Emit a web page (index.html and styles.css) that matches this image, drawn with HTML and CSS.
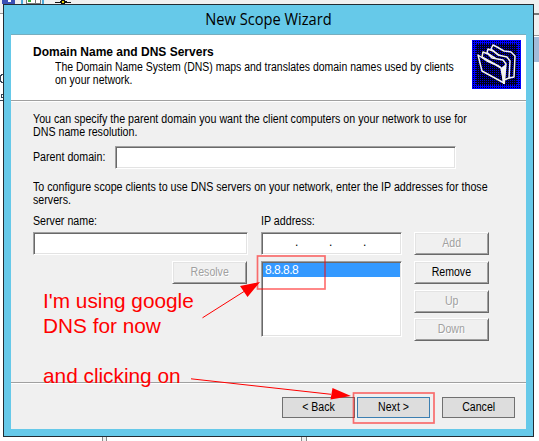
FILE: index.html
```
<!DOCTYPE html>
<html lang="en">
<head>
<meta charset="utf-8">
<title>New Scope Wizard</title>
<link rel="stylesheet" href="styles.css">
</head>
<body>
<svg class="desktop" width="539" height="441" viewBox="0 0 539 441" shape-rendering="crispEdges">
  <rect width="539" height="441" fill="#fff"/>
  <rect width="539" height="13" fill="#f0f0f0"/>
  <rect x="533" y="13" width="6" height="22" fill="#f0f0f0"/>
  <rect x="533" y="13" width="6" height="2" fill="#777"/>
  <rect x="533" y="35" width="6" height="1" fill="#999"/>
  <rect x="533" y="37" width="6" height="25" fill="#a2bbd9"/>
  <rect y="13" width="4" height="1" fill="#999"/>
  <rect x="2" width="13" height="4" fill="#3c50b5"/>
  <rect x="8" width="3" height="2" fill="#fff"/>
  <rect x="21" width="2" height="4" fill="#4aa8d8"/>
  <rect x="26" width="15" height="4" fill="#777"/>
  <rect x="27" width="13" height="3" fill="#fff"/>
  <path d="M28 0h3v2h-3z" fill="#35ad35"/>
  <rect x="35" width="1" height="3" fill="#777"/>
  <rect x="42" width="2" height="4" fill="#4aa8d8"/>
  <path d="M55 2h16v1h-16zM60 1h7v1h-7zM61 0h4v4h-4z" fill="#111"/>
  <rect x="62" y="1" width="2" height="2" fill="#e8d000"/>
  <path d="M102 437h1v4h-1zM106 437h1v4h-1zM301 437h1v4h-1zM306 437h1v4h-1z" fill="#888"/>
  <path d="M103 437h3v4h-3zM302 437h4v4h-4z" fill="#f0f0f0"/>
  <path d="M3 74H1v1H0v6h1v1h2M3 94H1v3h2v3H0" fill="none" stroke="#345"/>
</svg>

<main class="window">
  <h1 class="titlebar">New Scope Wizard</h1>
  <section class="client">
    <header class="banner">
      <div class="heading">
        <h2>Domain Name and DNS Servers</h2>
        <p class="narrow">The Domain Name System (DNS) maps and translates domain names used by clients<br>on your network.</p>
      </div>
      <svg class="folders" width="49" height="49" viewBox="0 0 49 49">
        <defs>
          <pattern id="dots" width="2" height="2" patternUnits="userSpaceOnUse"><rect width="2" height="2" fill="#0000ff"/><rect x="1" y="1" width="1" height="1" fill="#000010"/></pattern>
          <pattern id="shade" width="2" height="2" patternUnits="userSpaceOnUse"><rect width="2" height="2" fill="#000018"/><rect width="1" height="1" fill="#0000e0"/></pattern>
        </defs>
        <rect width="49" height="49" fill="url(#dots)"/>
        <rect x="4" y="4" width="41" height="41" fill="url(#shade)"/>
        <g fill="url(#shade)" stroke="#f2f2f2" stroke-width="1.5" stroke-linejoin="round">
          <path d="M19 9l2-4 4 2 7 4 7 1 4 4-1 21-5 1-5-19z"/>
          <path d="M15 13l1-4 5 2 5 4 9 2 3 4-1 17-5 2-3-18z"/>
          <path d="M10 17l1-5 5 2 4 4 11 2 3 4-2 19-4-16z"/>
          <path d="M6 15l4 16 22 12-3-15-5-3-9-4z"/>
        </g>
        <path d="M29 28l5-4-1 20h-2z" fill="#f2f2f2"/>
      </svg>
    </header>

    <div class="page">
      <p class="narrow">You can specify the parent domain you want the client computers on your network to use for<br>DNS name resolution.</p>
      <div class="parent"><label class="narrow">Parent domain:</label><div class="field"></div></div>
      <p class="narrow hint">To configure scope clients to use DNS servers on your network, enter the IP addresses for those<br>servers.</p>
      <div class="servers">
        <div class="name-col">
          <label class="narrow">Server name:</label>
          <div class="field"></div>
          <button class="raised off resolve"><span>Resolve</span></button>
        </div>
        <div class="ip-col">
          <label class="narrow">IP address:</label>
          <div class="field ip"><i>.</i><i>.</i><i>.</i></div>
          <div class="list"><div class="selected">8.8.8.8</div></div>
        </div>
        <div class="actions">
          <button class="raised off"><span>Add</span></button>
          <button class="raised"><span>Remove</span></button>
          <button class="raised off"><span>Up</span></button>
          <button class="raised off"><span>Down</span></button>
        </div>
      </div>
    </div>

    <footer class="footer">
      <button class="flat"><span>&lt; Back</span></button>
      <button class="flat default"><span>Next &gt;</span></button>
      <button class="flat cancel"><span>Cancel</span></button>
    </footer>
  </section>
</main>

<p class="note google">I'm using google<br>DNS for now</p>
<p class="note clicking">and clicking on</p>
<svg class="marks" width="539" height="441" viewBox="0 0 539 441">
  <g fill="none" stroke="#ff0000" stroke-opacity=".55" stroke-width="1.7">
    <rect x="257.500" y="256" width="67.500" height="33"/>
    <rect x="353.500" y="393" width="80.500" height="30"/>
  </g>
  <g fill="#f00" stroke="#f00">
    <path d="M202.500 317.800L244 291.500M191 378.800L331 394.300"/>
    <path stroke="none" d="M260 282l-20 4 7.500 11zM351 396l-18.500-8-2 11.500z"/>
  </g>
</svg>
</body>
</html>
```
FILE: styles.css
```
* { box-sizing: border-box; }
body {
  margin: 0;
  width: 539px;
  height: 441px;
  position: relative;
  overflow: hidden;
  font: 12px/13px "Liberation Sans", Arial, sans-serif;
  color: #000;
}
h1, h2, p { margin: 0; font-weight: normal; }
.desktop, .marks { position: absolute; left: 0; top: 0; }
.window {
  position: absolute;
  left: 3px;
  top: 4px;
  width: 531px;
  height: 433px;
  padding: 0 7px 7px;
  border: 1px solid #222c33;
  background: #66c9e9;
}
.titlebar {
  height: 29px;
  font: 15.5px/29px "Open Sans", sans-serif;
  text-align: center;
  transform: scaleX(.945);
}
.client {
  height: 395px;
  display: flex;
  flex-direction: column;
  background: #f0f0f0;
  border-top: 1px solid #77aebf;
  width: 515px;
}
.narrow { transform: scaleX(.889); transform-origin: 0 0; }
.banner {
  height: 66px;
  display: flex;
  justify-content: space-between;
  padding: 5px 5px 0 22px;
  background: #fff;
  border-bottom: 1px solid #a0a0a0;
  box-shadow: 0 1px #fff;
  white-space: nowrap;
}
.heading { width: 430px; }
.folders { flex: none; }
.banner h2 {
  font-weight: bold;
  font-size: 12px;
  margin-top: 6px;
}
.banner p { margin: 2px 0 0 22px; transform: scaleX(.873); }
.page { padding: 12px 0 0 22px; flex: 1; white-space: nowrap; }
.parent { display: flex; align-items: center; margin-top: 7px; height: 23px; }
.parent label { width: 82px; }
.parent .field { width: 341px; }
.hint { margin-top: 12px; }
.field, .list {
  height: 23px;
  background: #fff;
  border: 1px solid;
  border-color: #a0a0a0 #fff #fff #a0a0a0;
  box-shadow: inset 1px 1px #696969, inset -1px -1px #e3e3e3;
}
.servers {
  display: grid;
  grid-template-columns: 215px 141px 75px;
  column-gap: 13px;
  margin-top: 7px;
}
.servers label { display: block; height: 18px; line-height: 14px; }
.name-col { display: flex; flex-direction: column; }
.resolve { margin: 6px 1px 0 auto; }
.ip { display: flex; padding: 3px 0 0 33px; gap: 31px; }
.ip i { font-style: normal; width: 3px; }
.list { height: 76px; margin-top: 6px; padding: 1px; }
.selected { background: #3399ff; color: #fff; height: 14px; padding-left: 2px; line-height: 15px; letter-spacing: -.5px; }
.actions { padding-top: 18px; display: flex; flex-direction: column; gap: 6px; margin-left: -1px; }
button { font: inherit; color: inherit; padding: 0; margin: 0; }
button span { display: inline-block; transform: scaleX(.88); }
.raised {
  width: 75px;
  height: 23px;
  background: #f0f0f0;
  border: 1px solid;
  border-color: #fff #696969 #696969 #fff;
  box-shadow: inset 1px 1px #e3e3e3, inset -1px -1px #a0a0a0;
}
.raised:last-child { margin-top: -1px; }
.resolve:last-child { margin-top: 6px; }
.off { color: #a0a0a0; text-shadow: 1px 1px #fff; }
.footer {
  height: 47px;
  display: flex;
  align-items: flex-start;
  gap: 2px;
  padding: 14px 0 0 271px;
  border-top: 1px solid #a0a0a0;
  box-shadow: inset 0 1px #fff;
}
.flat { width: 73px; height: 21px; border: 1px solid #707070; background: #ddd; }
.default { border-color: #3c7fb1; }
.cancel { margin-left: 10px; }
.note {
  position: absolute;
  font-size: 20.8px;
  line-height: 25px;
  color: #f00;
  white-space: nowrap;
}
.google { left: 43px; top: 288px; }
.clicking { left: 43px; top: 363px; }
```
